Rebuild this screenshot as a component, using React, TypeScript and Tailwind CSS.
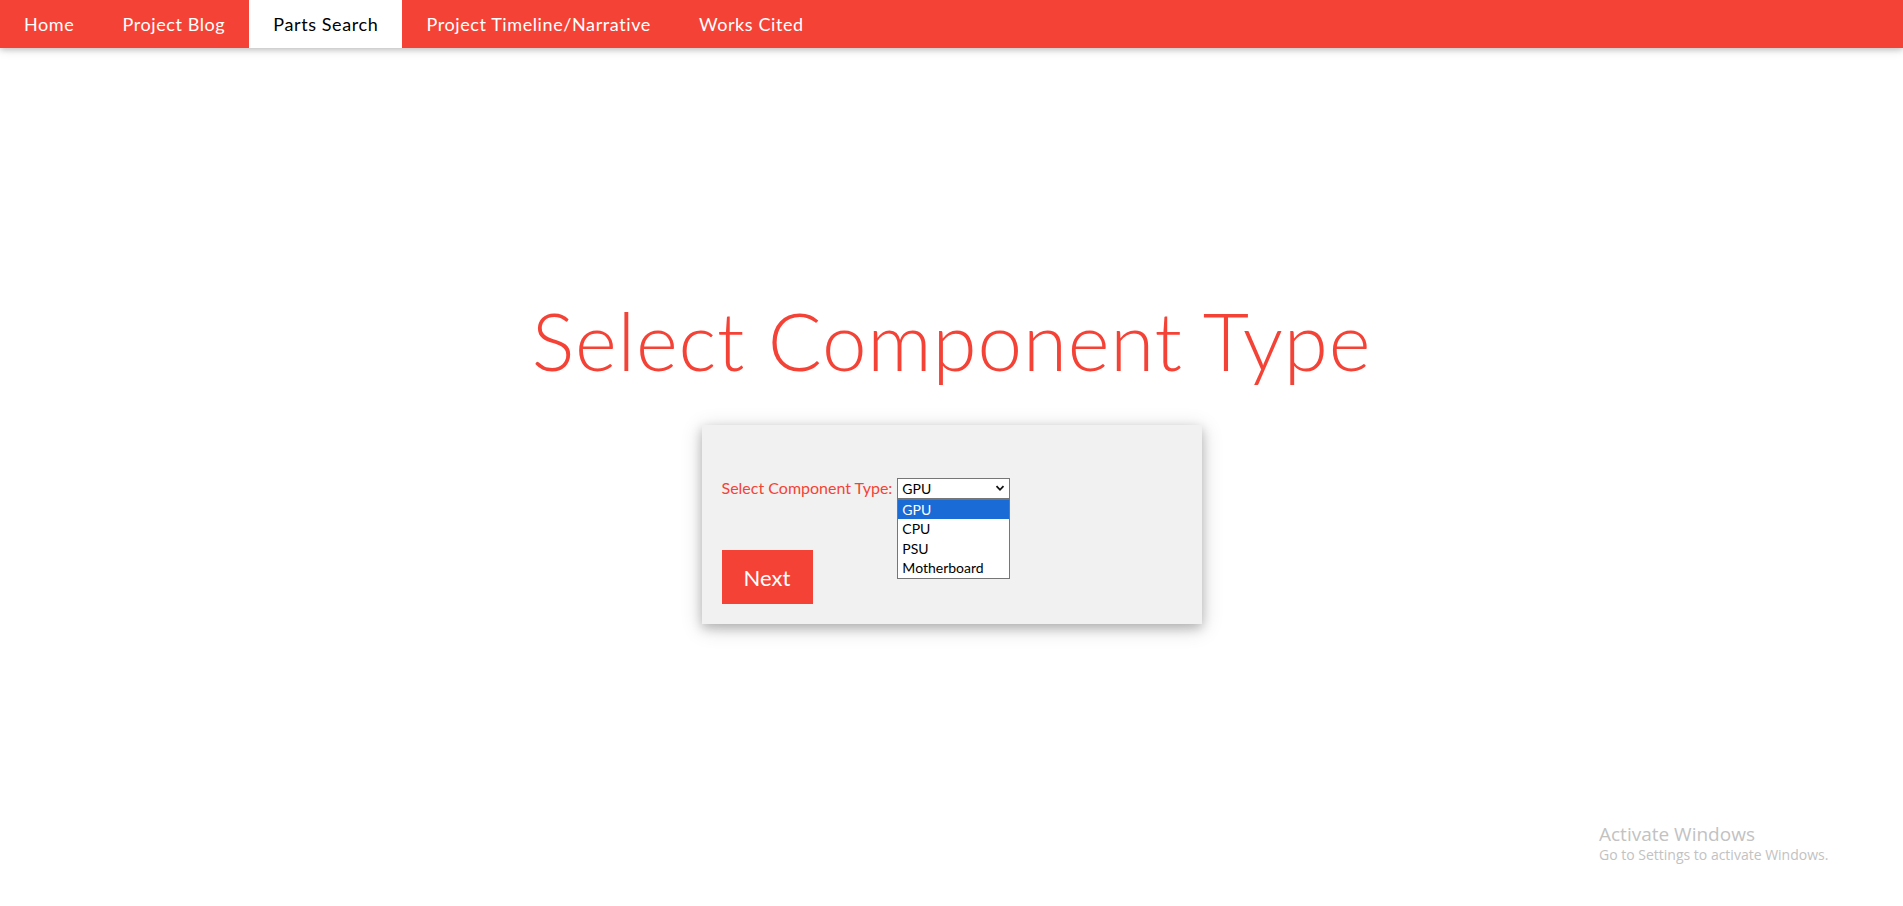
import React from 'react';

const navItems = ['Home', 'Project Blog', 'Parts Search', 'Project Timeline/Narrative', 'Works Cited'];
const options = ['GPU', 'CPU', 'PSU', 'Motherboard'];

const NavBar: React.FC = () => {
    return (
        <nav className="flex h-[48px] bg-[#f44336] shadow-[0_2px_5px_0_rgba(0,0,0,0.16),0_2px_10px_0_rgba(0,0,0,0.12)]">
            {navItems.map((item) => (
                <a
                    key={item}
                    className={
                        item === 'Parts Search'
                            ? 'flex items-center px-6 bg-white text-black text-[18px] tracking-[0.6px]'
                            : 'flex items-center px-6 text-white text-[18px] tracking-[0.6px]'
                    }
                >
                    {item}
                </a>
            ))}
        </nav>
    );
};

const FakeSelect: React.FC = () => {
    return (
        <div className="relative">
            <div className="w-[113px] h-[21px] border border-[#767676] bg-white flex items-center justify-between pl-[4px] pr-[4px] text-[14px] text-black">
                <span>GPU</span>
                <svg width="10" height="10" viewBox="0 0 10 10">
                    <path d="M1.5 3.2 L5 6.8 L8.5 3.2" fill="none" stroke="#111" strokeWidth="1.8" />
                </svg>
            </div>
            {/* open list */}
            <div className="absolute left-0 top-[21px] w-[113px] border border-[#767676] bg-white z-10">
                {options.map((o, i) => (
                    <div
                        key={o}
                        className={
                            i === 0
                                ? 'h-[19.5px] flex items-center pl-[4px] text-[14px] bg-[#1a6bd6] text-white'
                                : 'h-[19.5px] flex items-center pl-[4px] text-[14px] text-black'
                        }
                    >
                        {o}
                    </div>
                ))}
            </div>
        </div>
    );
};

export default function App() {
    return (
        <div className="relative min-h-screen bg-white font-['Lato',sans-serif]">
            <NavBar />

            <h1 className="mt-[244px] text-center text-[80px] leading-[96px] tracking-[0.8px] text-[#f44336] font-light">
                Select Component Type
            </h1>

            <div className="mx-auto mt-[37px] w-[500px] h-[199px] bg-[#f1f1f1] px-5 pt-[51px] shadow-[0_4px_10px_0_rgba(0,0,0,0.2),0_4px_20px_0_rgba(0,0,0,0.19)]">
                <div className="flex items-center gap-[5px]">
                    <label className="text-[16px] text-[#f44336]">Select Component Type:</label>
                    <FakeSelect />
                </div>
                <button className="mt-[50px] w-[91px] h-[54px] bg-[#f44336] text-white text-[22px]">Next</button>
            </div>

            <div className="absolute left-[1599px] top-[822px] font-['Open_Sans',sans-serif] text-[#c2c2c2]">
                <div className="text-[19px] leading-[24px]">Activate Windows</div>
                <div className="text-[14px] leading-[18px]">Go to Settings to activate Windows.</div>
            </div>
        </div>
    );
}
